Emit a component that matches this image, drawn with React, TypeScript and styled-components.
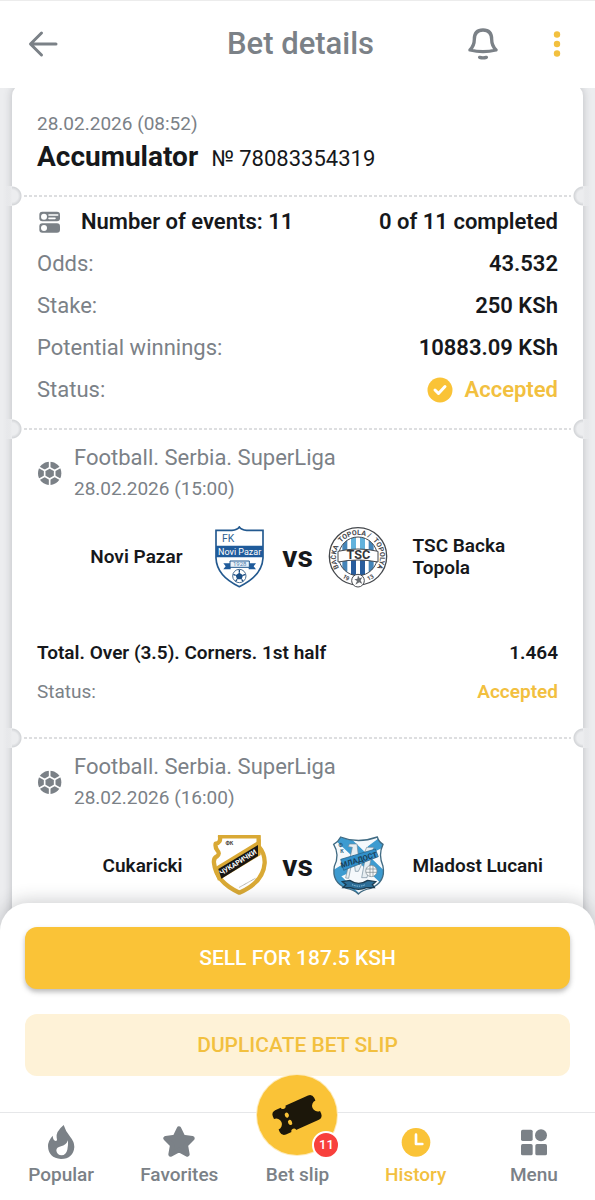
import React from 'react';
import styled, { createGlobalStyle } from 'styled-components';

const gold = '#fac337';
const goldText = '#f2c03f';
const grey = '#7b8187';
const ink = '#16181b';
const backdrop = '#ecedef';

const GlobalStyle = createGlobalStyle`
  *, *::before, *::after { box-sizing: border-box; }
  body {
    margin: 0;
    background: ${backdrop};
    color: ${ink};
    font-family: Roboto, "Liberation Sans", sans-serif;
  }
  button { font-family: inherit; border: 0; padding: 0; background: none; cursor: pointer; }
  h1, h2, p, dl, dd, dt { margin: 0; font-weight: inherit; }
  svg { display: block; flex: none; }
`;

const Shell = styled.div`
  display: flex;
  flex-direction: column;
  height: 100vh;
`;

const Header = styled.header`
  display: grid;
  grid-template-columns: 1fr auto 1fr;
  align-items: center;
  flex: none;
  height: 88px;
  padding: 0 22px 2px 28px;
  background: #fff;
  border-top: 1px solid #ececec;
`;

const Title = styled.h1`
  font-size: 31px;
  line-height: 36px;
  font-weight: 500;
  color: ${grey};
`;

const IconButton = styled.button<{ $width: number }>`
  display: flex;
  align-items: center;
  justify-content: center;
  width: ${p => p.$width}px;
  height: 40px;
`;

const HeaderActions = styled.div`
  display: flex;
  justify-content: flex-end;
  gap: 43px;
`;

const Scroller = styled.main`
  flex: 1;
  min-height: 0;
  margin-bottom: -28px;
  padding: 0 12px;
  overflow-x: hidden;
  overflow-y: auto;
  scrollbar-width: none;
`;

const Slip = styled.article`
  margin-top: -4px;
  padding-bottom: 60px;
  background: #fff;
  border-radius: 12px;
  box-shadow: 0 0 8px rgba(60, 65, 75, 0.28);
`;

const SlipHead = styled.header`
  padding: 25px 25px 18px;
`;

const SlipDate = styled.p`
  font-size: 19px;
  line-height: 30px;
  color: ${grey};
`;

const SlipTitle = styled.h2`
  display: flex;
  align-items: baseline;
  gap: 13px;
  font-size: 28px;
  line-height: 36px;
  font-weight: 700;
`;

const SlipNumber = styled.span`
  font-size: 22px;
  font-weight: 400;
`;

const Perforation = styled.div`
  position: relative;
  height: 2px;
  margin: 0 12px;
  background: repeating-linear-gradient(90deg, #dddee0 0 3px, transparent 3px 5px);

  &::before,
  &::after {
    content: '';
    position: absolute;
    top: -9px;
    width: 18px;
    height: 20px;
  }
  &::before {
    left: -20px;
    background:
      radial-gradient(circle at 0 50%, ${backdrop} 6px, #d3d5d8 9px, transparent 10px) right / 10px 100% no-repeat,
      linear-gradient(90deg, transparent, ${backdrop}) left / 8px 100% no-repeat;
  }
  &::after {
    right: -20px;
    background:
      radial-gradient(circle at 100% 50%, ${backdrop} 6px, #d3d5d8 9px, transparent 10px) left / 10px 100% no-repeat,
      linear-gradient(270deg, transparent, ${backdrop}) right / 8px 100% no-repeat;
  }
`;

const Summary = styled.dl`
  padding: 4px 25px 17px;
`;

const SummaryRow = styled.div<{ $strong?: boolean }>`
  display: flex;
  align-items: center;
  justify-content: space-between;
  height: 42px;
  font-size: 22px;
  line-height: 28px;

  dt {
    display: flex;
    align-items: center;
    gap: 19px;
    color: ${p => (p.$strong ? ink : grey)};
    font-weight: ${p => (p.$strong ? 600 : 400)};
  }
  dd { font-weight: 600; }
`;

const Accepted = styled.span`
  display: flex;
  align-items: center;
  gap: 12px;
  color: ${goldText};
`;

const EventBlock = styled.section`
  padding: 12px 25px 26px;
`;

const EventHead = styled.div`
  display: flex;
  align-items: center;
  gap: 12px;
  color: ${grey};
  line-height: 31px;
`;

const League = styled.h2`
  font-size: 22px;
`;

const Kickoff = styled.p`
  font-size: 19px;
`;

const Teams = styled.div`
  display: grid;
  grid-template-columns: 1fr 60px 60px 60px 1fr;
  align-items: center;
  margin: 22px 0 45px;
`;

const Team = styled.span<{ $home?: boolean }>`
  padding: ${p => (p.$home ? '0 25px 0 0' : '0 0 0 25px')};
  text-align: ${p => (p.$home ? 'right' : 'left')};
  font-size: 19px;
  line-height: 22px;
  font-weight: 600;
`;

const Versus = styled.span`
  font-size: 30px;
  line-height: 32px;
  font-weight: 700;
  text-align: center;
`;

const MarketRow = styled.div<{ $muted?: boolean }>`
  display: flex;
  justify-content: space-between;
  font-size: 19px;
  line-height: 39px;
  font-weight: ${p => (p.$muted ? 400 : 600)};
  color: ${p => (p.$muted ? grey : ink)};

  strong {
    font-weight: 600;
    color: ${p => (p.$muted ? goldText : ink)};
  }
`;

const Dock = styled.footer`
  position: relative;
  flex: none;
  background: #fff;
  border-radius: 28px 28px 0 0;
  box-shadow: 0 -2px 18px rgba(40, 45, 55, 0.24);
`;

const Actions = styled.div`
  display: flex;
  flex-direction: column;
  gap: 25px;
  padding: 24px 25px 36px;
`;

const ActionButton = styled.button<{ $primary?: boolean }>`
  height: 62px;
  border-radius: 12px;
  font-size: 21px;
  line-height: 28px;
  font-weight: 500;
  color: ${p => (p.$primary ? '#fff' : goldText)};
  background: ${p => (p.$primary ? gold : '#fef2d7')};
  box-shadow: ${p => (p.$primary ? '0 3px 5px rgba(60, 60, 60, 0.35)' : 'none')};
`;

const Nav = styled.nav`
  display: grid;
  grid-template-columns: repeat(5, 1fr);
  padding: 13px 2px;
  border-top: 1px solid #e6e7e9;
`;

const NavLink = styled.a<{ $active?: boolean }>`
  display: flex;
  flex-direction: column;
  align-items: center;
  gap: 5px;
  font-size: 19px;
  line-height: 24px;
  font-weight: 500;
  text-decoration: none;
  color: ${p => (p.$active ? goldText : grey)};
`;

const SlipBubble = styled.span`
  position: relative;
  display: flex;
  align-items: center;
  justify-content: center;
  width: 80px;
  height: 80px;
  margin: -51px 0 3px;
  border-radius: 50%;
  background: ${gold};
  box-shadow: 0 0 0 1px #fdebbd;
`;

const Badge = styled.span`
  position: absolute;
  right: -3px;
  bottom: -4px;
  width: 28px;
  height: 28px;
  border: 2px solid #fff;
  border-radius: 50%;
  background: #f8403c;
  color: #fff;
  font-size: 13px;
  line-height: 24px;
  text-align: center;
`;

const BackIcon = () => (
  <svg width="32" height="28" viewBox="0 0 32 28" fill="none" stroke={grey} strokeWidth="3" strokeLinecap="round" strokeLinejoin="round">
    <path d="M13.500 3 2.500 14 13.500 25M3 14h25" />
  </svg>
);

const BellIcon = () => (
  <svg width="30" height="32" viewBox="0 0 90 96" fill="none" stroke={grey} strokeWidth="10" strokeLinecap="round" strokeLinejoin="round">
    <path d="M6 66C16 56 19 48 19 34C19 14 30 6 45 6S71 14 71 34C71 48 74 56 84 66Q45 76 6 66Z" />
    <path d="M35 88Q45 91 55 88" />
  </svg>
);

const DotsIcon = () => (
  <svg width="8" height="28" viewBox="0 0 8 28" fill={goldText}>
    <circle cx="4" cy="4.500" r="3.200" />
    <circle cx="4" cy="14" r="3.200" />
    <circle cx="4" cy="23.500" r="3.200" />
  </svg>
);

const EventsIcon = () => (
  <svg width="25" height="24" viewBox="0 0 75 72">
    <rect x="7" y="5" width="62" height="29" rx="9" fill={grey} />
    <rect x="7" y="40" width="62" height="28" rx="9" fill={grey} />
    <circle cx="21" cy="20" r="9" fill="#fff" />
    <circle cx="21" cy="54" r="9" fill="#fff" />
    <path d="M36 15h26M36 25h18" stroke="#fff" strokeWidth="5" strokeLinecap="round" />
  </svg>
);

const BallIcon = () => (
  <svg width="25" height="25" viewBox="0 0 75 75">
    <circle cx="38" cy="37" r="35" fill={grey} />
    <g stroke="#fff" strokeWidth="5" fill="none">
      <path d="M38 20 53 28.500v17L38 54 23 45.500v-17Z" />
      <path d="M38 20V0M53 28.500 72 18M53 45.500 72 56M38 54v21M23 45.500 4 56M23 28.500 4 18" />
    </g>
  </svg>
);

const CheckIcon = () => (
  <svg width="26" height="26" viewBox="0 0 26 26">
    <circle cx="13" cy="13" r="12.500" fill={gold} />
    <path d="m8 13 3.500 3.500L18 9.500" fill="none" stroke="#fff" strokeWidth="3" strokeLinecap="round" strokeLinejoin="round" />
  </svg>
);

const NoviPazarCrest = () => (
  <svg width="60" height="62" viewBox="0 0 180 186" role="img" aria-label="Novi Pazar crest">
    <path d="M24 13H72Q88 12 94 3Q100 12 116 13H165V96Q162 150 94 182Q26 150 24 96Z" fill="#fff" stroke="#23598f" strokeWidth="5" />
    <path d="M24 59H165V94H24Z" fill="#1f5b9b" />
    <text x="42" y="49" fontSize="31" fill="#2d5f91">FK</text>
    <text x="95" y="86" fontSize="27" fill="#fff" textAnchor="middle">Novi Pazar</text>
    <path d="M46 112H68V130H46L53 121ZM144 112H122V130H144L137 121Z" fill="#1f5b9b" />
    <path d="M66 105H124V124H66Z" fill="#e9f2fa" stroke="#23598f" strokeWidth="3" />
    <text x="95" y="121" fontSize="18" fill="#4f7dac" textAnchor="middle">1928</text>
    <circle cx="94" cy="150" r="20" fill="#fff" stroke="#4c6f92" strokeWidth="3" />
    <path d="M94 140 105 148 101 160H87L83 148Z" fill="#1c4f86" />
    <path d="M94 131v9M112 145l-7 3M105 166l-4-6M83 166l4-6M76 145l7 3" stroke="#1c4f86" strokeWidth="4" />
  </svg>
);

const TscCrest = () => (
  <svg width="60" height="62" viewBox="0 0 180 186" role="img" aria-label="TSC Backa Topola crest">
    <defs>
      <clipPath id="tsc-field"><circle cx="90" cy="91" r="58" /></clipPath>
      <path id="tsc-top" d="M33 126A66 66 0 1 1 147 126" />
      <path id="tsc-bottom" d="M38 151A80 80 0 0 0 142 151" />
    </defs>
    <circle cx="90" cy="91" r="86" fill="#fff" stroke="#45484d" strokeWidth="4" />
    <g clipPath="url(#tsc-field)">
      <path d="M32 30H148V150H32Z" fill="#fff" />
      <path d="M43 30h15v120H43ZM122 30h15v120h-15Z" fill="#4585b8" />
      <path d="M69 30h15v120H69ZM96 30h15v120H96Z" fill="#62b2dc" />
      <path d="M69 95h15v55H69ZM96 95h15v55H96Z" fill="#285d9d" />
    </g>
    <circle cx="90" cy="91" r="58" fill="none" stroke="#45484d" strokeWidth="3" />
    <path d="M30 76Q90 62 150 76V108Q90 96 30 108Z" fill="#fff" stroke="#45484d" strokeWidth="3" />
    <text x="91" y="99" fontSize="38" fontWeight="700" textAnchor="middle" fill="#33363a">TSC</text>
    <text fontSize="21" fontWeight="700" fill="#45484d">
      <textPath href="#tsc-top" startOffset="0">BAČKA</textPath>
    </text>
    <text fontSize="21" fontWeight="700" fill="#45484d" textAnchor="middle">
      <textPath href="#tsc-top" startOffset="46%">TOPOLA /</textPath>
    </text>
    <text fontSize="21" fontWeight="700" fill="#45484d" textAnchor="end">
      <textPath href="#tsc-top" startOffset="100%">TOPOLYA</textPath>
    </text>
    <text fontSize="18" fontWeight="700" fill="#45484d">
      <textPath href="#tsc-bottom" startOffset="6">19</textPath>
    </text>
    <text fontSize="18" fontWeight="700" fill="#45484d">
      <textPath href="#tsc-bottom" startOffset="88">13</textPath>
    </text>
    <circle cx="90" cy="164" r="19" fill="#fff" stroke="#45484d" strokeWidth="3" />
    <path d="M82 176l5-11-8-5 9-2 2-10 5 9 8-3-5 9 5 11-9-5Z" fill="#686c70" />
  </svg>
);

const CukarickiCrest = () => (
  <svg width="60" height="62" viewBox="0 0 180 186" role="img" aria-label="Cukaricki crest">
    <path d="M36 4H152V34Q171 56 170 84Q166 142 94 173Q24 141 18 84Q16 69 27 64Q37 56 28 46Q21 38 23 26Q39 24 36 4Z" fill="#fff" stroke="#d9a935" strokeWidth="13" strokeLinejoin="round" />
    <path d="M19 98 158 13V60L30 137Q20 118 19 98Z" fill="#d9a935" />
    <path d="M31 102 150 30V63L40 131Z" fill="#171614" />
    <text transform="translate(94 88) rotate(-32)" fontSize="21" fontWeight="700" textAnchor="middle" fill="#fff">ЧУКАРИЧКИ</text>
    <text x="64" y="29" fontSize="16" fontWeight="700" textAnchor="middle" fill="#3d3a33">ФК</text>
    <path d="M94 157 142 130" stroke="#a9a79f" strokeWidth="3" strokeDasharray="3 1" />
  </svg>
);

const MladostCrest = () => (
  <svg width="60" height="62" viewBox="0 0 180 186" role="img" aria-label="Mladost Lucani crest">
    <defs>
      <clipPath id="mladost-field">
        <path d="M38 6Q90 27 148 6Q152 20 165 28Q150 58 165 94Q174 141 128 160Q104 164 91 177Q78 164 56 160Q10 142 19 94Q36 59 17 28Q31 20 38 6Z" />
      </clipPath>
    </defs>
    <g clipPath="url(#mladost-field)">
      <path d="M10 0H175V186H10Z" fill="#f5f9fc" />
      <path d="M10 4H62L180 118V165ZM10 95 105 186H60L10 140Z" fill="#3d9bd0" />
      <path d="M165 0 120 34 112 64 180 30ZM60 78 14 106V136L66 112Z" fill="#3d9bd0" />
    </g>
    <path d="M38 6Q90 27 148 6Q152 20 165 28Q150 58 165 94Q174 141 128 160Q104 164 91 177Q78 164 56 160Q10 142 19 94Q36 59 17 28Q31 20 38 6Z" fill="none" stroke="#416b83" strokeWidth="4" />
    <path d="M53 129 73 37 61 35 64 27H87L94 89 116 37H137L117 128H101L113 64 91 109H82L76 60 62 130Z" fill="#e7eef2" stroke="#71899a" strokeWidth="2" />
    <path d="M38 73 142 42 151 65 47 106Z" fill="#318fca" stroke="#275a78" strokeWidth="2" />
    <text transform="translate(95 82) rotate(-17)" fontSize="23" fontWeight="700" textAnchor="middle" fill="#193f59">МЛАДОСТ</text>
    <circle cx="130" cy="108" r="17" fill="#f5f8f9" stroke="#78858d" strokeWidth="2" />
    <path d="M114 102h32M114 112h32M126 92v32M135 92v32" stroke="#78858d" strokeWidth="2" />
    <text x="38" y="36" fontSize="16" fontWeight="700" textAnchor="middle" fill="#275a78">Ф</text>
    <text x="42" y="53" fontSize="16" fontWeight="700" textAnchor="middle" fill="#275a78">К</text>
    <path d="M43 140 65 136Q92 154 119 136L143 140 133 149 139 158H115Q92 168 68 158H45L54 149Z" fill="#2d6f99" stroke="#1c3d52" strokeWidth="4" />
    <path d="M72 149Q92 158 112 149" fill="none" stroke="#9cd0ea" strokeWidth="3" strokeDasharray="4 3" />
  </svg>
);

const FlameIcon = () => (
  <svg width="32" height="32" viewBox="134 704 96 96" overflow="visible">
    <path d="M190 701Q196 721 210 737Q222 751 222 767Q219 802 182 803Q144 800 143 764Q143 749 157 733Q158 747 166 749Q172 749 169 739Q166 721 190 701Z" fill={grey} />
    <path d="M203 747Q204 761 201 775Q197 791 184 792Q170 790 168 778Q168 768 182 765Q197 762 203 747Z" fill="#fff" />
  </svg>
);

const StarIcon = () => (
  <svg width="32" height="32" viewBox="0 0 96 96">
    <path d="M48 8 60 33 88 37 68 57 73 85 48 72 23 85 28 57 8 37 36 33Z" fill={grey} stroke={grey} strokeWidth="14" strokeLinejoin="round" />
  </svg>
);

const ClockIcon = () => (
  <svg width="32" height="32" viewBox="0 0 96 96">
    <circle cx="48" cy="49" r="43" fill={gold} />
    <path d="M48 26V54H67" fill="none" stroke="#fff" strokeWidth="8" strokeLinecap="round" strokeLinejoin="round" />
  </svg>
);

const MenuIcon = () => (
  <svg width="32" height="32" viewBox="0 0 96 96" fill={grey}>
    <rect x="9" y="11" width="35" height="34" rx="5" />
    <circle cx="69" cy="28" r="18" />
    <rect x="9" y="54" width="35" height="34" rx="5" />
    <rect x="52" y="54" width="35" height="34" rx="5" />
  </svg>
);

const TicketIcon = () => (
  <svg width="54" height="54" viewBox="0 0 162 162">
    <g transform="translate(81 81) rotate(-24)">
      <path d="M-54 -40H54Q67 -39 68 -26V-17A17 17 0 0 0 68 17V26Q67 39 54 40H-54Q-67 39 -68 26V17A17 17 0 0 0 -68 -17V-26Q-67 -39 -54 -40Z" fill="#1c170a" />
      <g fill={gold}>
        <circle cx="-28" cy="-41" r="8" />
        <ellipse cx="-28" cy="-12" rx="6" ry="8" />
        <ellipse cx="-28" cy="12" rx="6" ry="8" />
        <circle cx="-28" cy="41" r="8" />
      </g>
    </g>
  </svg>
);

type Fixture = {
  league: string;
  kickoff: string;
  home: string;
  away: string;
  homeCrest: React.ReactNode;
  awayCrest: React.ReactNode;
  market?: string;
  odds?: string;
};

const fixtures: Fixture[] = [
  {
    league: 'Football. Serbia. SuperLiga',
    kickoff: '28.02.2026 (15:00)',
    home: 'Novi Pazar',
    away: 'TSC Backa Topola',
    homeCrest: <NoviPazarCrest />,
    awayCrest: <TscCrest />,
    market: 'Total. Over (3.5). Corners. 1st half',
    odds: '1.464',
  },
  {
    league: 'Football. Serbia. SuperLiga',
    kickoff: '28.02.2026 (16:00)',
    home: 'Cukaricki',
    away: 'Mladost Lucani',
    homeCrest: <CukarickiCrest />,
    awayCrest: <MladostCrest />,
  },
];

const totals = [
  ['Odds:', '43.532'],
  ['Stake:', '250 KSh'],
  ['Potential winnings:', '10883.09 KSh'],
];

const EventCard = ({ fixture }: { fixture: Fixture }) => (
  <>
    <Perforation />
    <EventBlock>
      <EventHead>
        <BallIcon />
        <div>
          <League>{fixture.league}</League>
          <Kickoff>{fixture.kickoff}</Kickoff>
        </div>
      </EventHead>
      <Teams>
        <Team $home>{fixture.home}</Team>
        {fixture.homeCrest}
        <Versus>vs</Versus>
        {fixture.awayCrest}
        <Team>{fixture.away}</Team>
      </Teams>
      {fixture.market && (
        <>
          <MarketRow>
            <span>{fixture.market}</span>
            <strong>{fixture.odds}</strong>
          </MarketRow>
          <MarketRow $muted>
            <span>Status:</span>
            <strong>Accepted</strong>
          </MarketRow>
        </>
      )}
    </EventBlock>
  </>
);

export default function App() {
  return (
    <Shell>
      <GlobalStyle />
      <Header>
        <IconButton $width={32} type="button" aria-label="Back"><BackIcon /></IconButton>
        <Title>Bet details</Title>
        <HeaderActions>
          <IconButton $width={30} type="button" aria-label="Notifications"><BellIcon /></IconButton>
          <IconButton $width={32} type="button" aria-label="More options"><DotsIcon /></IconButton>
        </HeaderActions>
      </Header>

      <Scroller>
        <Slip>
          <SlipHead>
            <SlipDate>28.02.2026 (08:52)</SlipDate>
            <SlipTitle>
              Accumulator <SlipNumber>№ 78083354319</SlipNumber>
            </SlipTitle>
          </SlipHead>
          <Perforation />
          <Summary>
            <SummaryRow $strong>
              <dt><EventsIcon />Number of events: 11</dt>
              <dd>0 of 11 completed</dd>
            </SummaryRow>
            {totals.map(([label, value]) => (
              <SummaryRow key={label}>
                <dt>{label}</dt>
                <dd>{value}</dd>
              </SummaryRow>
            ))}
            <SummaryRow>
              <dt>Status:</dt>
              <dd><Accepted><CheckIcon />Accepted</Accepted></dd>
            </SummaryRow>
          </Summary>
          {fixtures.map(fixture => (
            <EventCard key={fixture.kickoff} fixture={fixture} />
          ))}
        </Slip>
      </Scroller>

      <Dock>
        <Actions>
          <ActionButton $primary type="button">SELL FOR 187.5 KSH</ActionButton>
          <ActionButton type="button">DUPLICATE BET SLIP</ActionButton>
        </Actions>
        <Nav aria-label="Main">
          <NavLink href="#popular"><FlameIcon />Popular</NavLink>
          <NavLink href="#favorites"><StarIcon />Favorites</NavLink>
          <NavLink href="#bet-slip">
            <SlipBubble><TicketIcon /><Badge>11</Badge></SlipBubble>
            Bet slip
          </NavLink>
          <NavLink href="#history" $active aria-current="page"><ClockIcon />History</NavLink>
          <NavLink href="#menu"><MenuIcon />Menu</NavLink>
        </Nav>
      </Dock>
    </Shell>
  );
}
